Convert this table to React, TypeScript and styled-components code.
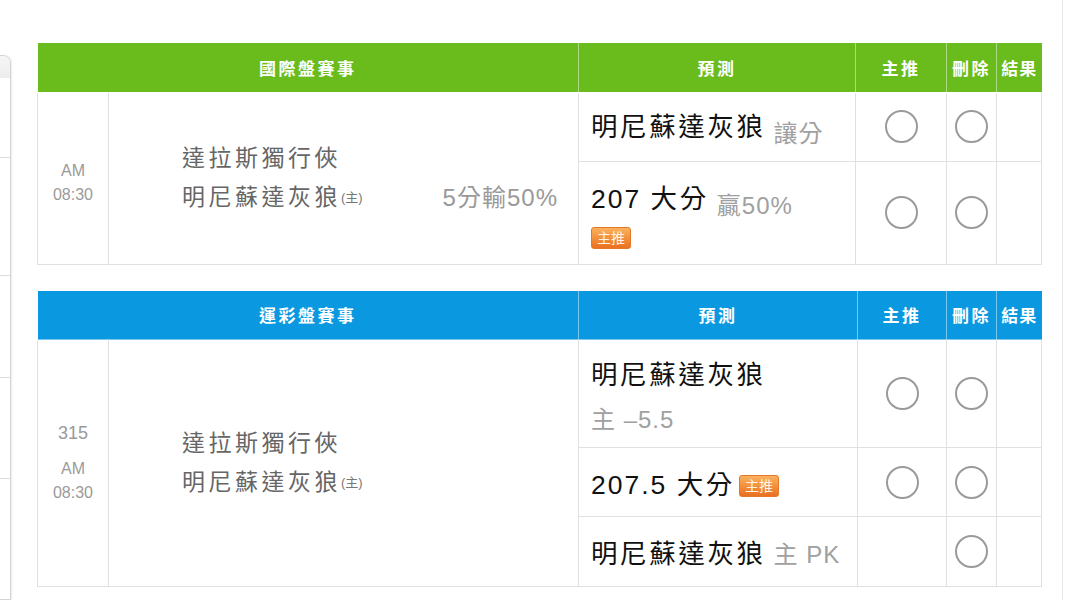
import React from 'react';
import styled, { createGlobalStyle } from 'styled-components';

const GlobalStyle = createGlobalStyle`
  html, body {
    margin: 0;
    padding: 0;
    background: #fff;
  }
  body {
    font-family: 'Liberation Sans', 'Noto Sans CJK TC', sans-serif;
  }
`;

const Page = styled.div`
  display: flex;
  align-items: flex-start;
  width: 1063px;
  height: 600px;
  overflow: hidden;
  border-right: 1px solid #e8e8e8;
  box-sizing: border-box;
`;

const SidePanel = styled.aside`
  flex: 0 0 11px;
  margin-top: 55px;
  height: 545px;
  box-sizing: border-box;
  border: 1px solid #d4d4d4;
  border-left: none;
  border-top-right-radius: 8px;
  box-shadow: 1px 0 2px rgba(0, 0, 0, 0.08);
  overflow: hidden;
`;

const SideHead = styled.div`
  height: 22px;
  background: linear-gradient(#f6f6f6, #ececec);
`;

const SideRow = styled.div<{ $h: number }>`
  height: ${(p) => p.$h}px;
  border-bottom: 1px solid #dcdcdc;
  box-sizing: border-box;
`;

const Content = styled.main`
  display: flex;
  flex-direction: column;
  gap: 26px;
  margin-left: 26px;
  padding-top: 43px;
`;

const Table = styled.table`
  width: 1005px;
  border-collapse: collapse;
  table-layout: fixed;
`;

const HeadRow = styled.tr<{ $bg: string; $h: number }>`
  height: ${(p) => p.$h}px;
  background: ${(p) => p.$bg};
`;

const Th = styled.th`
  padding: 0;
  color: #fff;
  font-size: 17px;
  font-weight: bold;
  letter-spacing: 2.5px;
  text-align: center;
  border: 1px solid rgba(255, 255, 255, 0.45);
  border-top: none;
  &:first-child {
    border-left: none;
  }
  &:last-child {
    border-right: none;
    letter-spacing: 1px;
  }
`;

const Row = styled.tr<{ $h: number }>`
  height: ${(p) => p.$h}px;
`;

const Td = styled.td`
  padding: 0;
  border: 1px solid #e0e0e0;
  vertical-align: middle;
`;

const TimeCell = styled(Td)<{ $shift?: number }>`
  padding-top: ${(p) => p.$shift ?? 0}px;
  text-align: center;
  color: #9a9a9a;
  font-size: 16px;
  line-height: 24px;
`;

const GameNo = styled.div`
  font-size: 18px;
  margin-bottom: 12px;
`;

const MatchCell = styled(Td)`
  padding: 0 20px 0 73px;
`;

const MatchInner = styled.div`
  display: flex;
  align-items: flex-end;
  justify-content: space-between;
`;

const Teams = styled.div`
  color: #666;
  font-size: 23px;
  letter-spacing: 3.5px;
  line-height: 39px;
`;

const HomeMark = styled.span`
  font-size: 13px;
  letter-spacing: 0;
  color: #777;
  vertical-align: 3px;
`;

const Odds = styled.div`
  color: #999;
  font-size: 24px;
  letter-spacing: 1px;
  line-height: 39px;
`;

const PredictCell = styled(Td)`
  padding: 0 10px 0 12px;
`;

const Pick = styled.span`
  color: #111;
  font-size: 26.5px;
  letter-spacing: 2.6px;
`;

const Num = styled.span`
  letter-spacing: 2px;
`;

const Note = styled.span<{ $drop?: number }>`
  color: #a0a0a0;
  font-size: 24px;
  letter-spacing: 1px;
  margin-left: 8px;
  vertical-align: ${(p) => -(p.$drop ?? 0)}px;
`;

const NoteLine = styled.div`
  color: #a0a0a0;
  font-size: 24px;
  letter-spacing: 1px;
  margin-top: 8px;
`;

const Badge = styled.span`
  display: inline-block;
  box-sizing: border-box;
  width: 40px;
  height: 22px;
  line-height: 20px;
  text-align: center;
  font-size: 14px;
  color: #fff3e6;
  letter-spacing: 0;
  border: 1px solid #e4782a;
  border-radius: 3px;
  background: linear-gradient(#fbb25c, #ea7020);
  vertical-align: 3px;
`;

const InlineBadge = styled(Badge)`
  margin-left: 4px;
`;

const BadgeLine = styled.div`
  margin-top: 6px;
  line-height: 0;
`;

const CheckCell = styled(Td)`
  text-align: center;
`;

const Circle = styled.span`
  display: inline-block;
  width: 33px;
  height: 33px;
  box-sizing: border-box;
  border: 2px solid #9a9a9a;
  border-radius: 50%;
  vertical-align: middle;
`;

type Col = { title: string; width: number };

const columns = (mainWidth: number): Col[] => [
  { title: '', width: 71 },
  { title: '', width: 470 },
  { title: '預測', width: mainWidth },
  { title: '主推', width: 368 - mainWidth },
  { title: '刪除', width: 50 },
  { title: '結果', width: 45 },
];

function Head({ title, bg, h, main }: { title: string; bg: string; h: number; main: number }) {
  const cols = columns(main);
  return (
    <>
      <colgroup>
        {cols.map((c, i) => (
          <col key={i} style={{ width: c.width }} />
        ))}
      </colgroup>
      <thead>
        <HeadRow $bg={bg} $h={h}>
          <Th colSpan={2}>{title}</Th>
          {cols.slice(2).map((c) => (
            <Th key={c.title}>{c.title}</Th>
          ))}
        </HeadRow>
      </thead>
    </>
  );
}

function Match({ odds }: { odds?: string }) {
  return (
    <MatchInner>
      <Teams>
        <div>達拉斯獨行俠</div>
        <div>
          明尼蘇達灰狼<HomeMark>(主)</HomeMark>
        </div>
      </Teams>
      {odds && <Odds>{odds}</Odds>}
    </MatchInner>
  );
}

export default function App() {
  return (
    <>
      <GlobalStyle />
      <Page>
        <SidePanel>
          <SideHead />
          <SideRow $h={80} />
          <SideRow $h={118} />
          <SideRow $h={102} />
          <SideRow $h={101} />
        </SidePanel>

        <Content>
          <Table>
            <Head title="國際盤賽事" bg="#69bc1b" h={49} main={277} />
            <tbody>
              <Row $h={69}>
                <TimeCell rowSpan={2} $shift={10}>
                  AM
                  <br />
                  08:30
                </TimeCell>
                <MatchCell rowSpan={2}>
                  <Match odds="5分輸50%" />
                </MatchCell>
                <PredictCell>
                  <Pick>明尼蘇達灰狼</Pick>
                  <Note $drop={6}>讓分</Note>
                </PredictCell>
                <CheckCell>
                  <Circle />
                </CheckCell>
                <CheckCell>
                  <Circle />
                </CheckCell>
                <Td />
              </Row>
              <Row $h={103}>
                <PredictCell>
                  <Pick>
                    <Num>207 </Num>大分
                  </Pick>
                  <Note $drop={6}>贏50%</Note>
                  <BadgeLine>
                    <Badge>主推</Badge>
                  </BadgeLine>
                </PredictCell>
                <CheckCell>
                  <Circle />
                </CheckCell>
                <CheckCell>
                  <Circle />
                </CheckCell>
                <Td />
              </Row>
            </tbody>
          </Table>

          <Table>
            <Head title="運彩盤賽事" bg="#0a99e0" h={49} main={279} />
            <tbody>
              <Row $h={108}>
                <TimeCell rowSpan={3}>
                  <GameNo>315</GameNo>
                  AM
                  <br />
                  08:30
                </TimeCell>
                <MatchCell rowSpan={3}>
                  <Match />
                </MatchCell>
                <PredictCell>
                  <Pick>明尼蘇達灰狼</Pick>
                  <NoteLine>主 –5.5</NoteLine>
                </PredictCell>
                <CheckCell>
                  <Circle />
                </CheckCell>
                <CheckCell>
                  <Circle />
                </CheckCell>
                <Td />
              </Row>
              <Row $h={69}>
                <PredictCell>
                  <Pick>
                    <Num>207.5 </Num>大分
                  </Pick>
                  <InlineBadge>主推</InlineBadge>
                </PredictCell>
                <CheckCell>
                  <Circle />
                </CheckCell>
                <CheckCell>
                  <Circle />
                </CheckCell>
                <Td />
              </Row>
              <Row $h={70}>
                <PredictCell>
                  <Pick>明尼蘇達灰狼</Pick>
                  <Note>主 PK</Note>
                </PredictCell>
                <CheckCell />
                <CheckCell>
                  <Circle />
                </CheckCell>
                <Td />
              </Row>
            </tbody>
          </Table>
        </Content>
      </Page>
    </>
  );
}
